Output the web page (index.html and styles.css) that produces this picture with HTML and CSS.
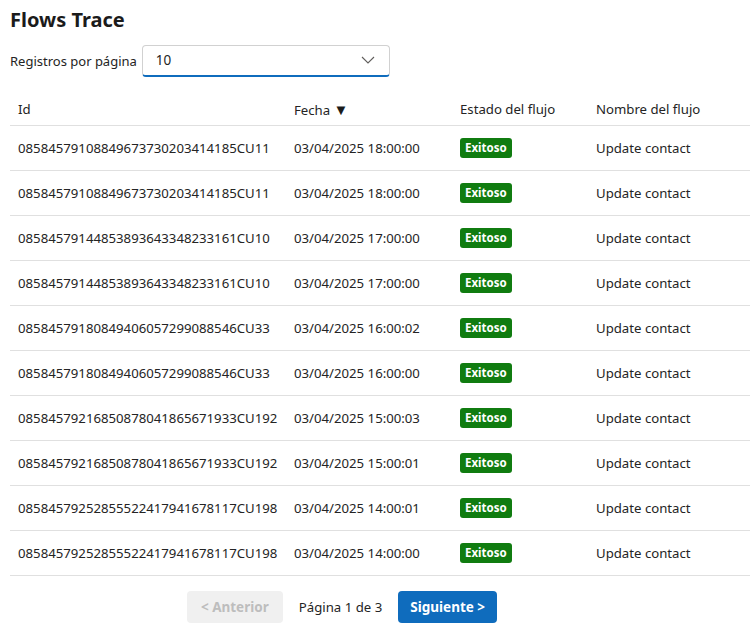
FILE: index.html
```html
<!DOCTYPE html>
<html lang="es">
<head>
<meta charset="utf-8">
<link rel="stylesheet" href="styles.css">
</head>
<body>
<div class="page">
  <h1 class="title">Flows Trace</h1>
  <div class="pager-size">
    <label class="size-label">Registros por página</label>
    <div class="select">
      <span class="select-value">10</span>
      <svg class="chev" width="14" height="8" viewBox="0 0 14 8"><path d="M1 1 L7 7 L13 1" fill="none" stroke="#605e5c" stroke-width="1.1"/></svg>
    </div>
  </div>
  <table class="grid">
    <thead>
      <tr>
        <th class="c-id">Id</th>
        <th class="c-date">Fecha <span class="sort">&#9660;</span></th>
        <th class="c-state">Estado del flujo</th>
        <th class="c-name">Nombre del flujo</th>
      </tr>
    </thead>
    <tbody>
      <tr><td>08584579108849673730203414185CU11</td><td>03/04/2025 18:00:00</td><td><span class="badge">Exitoso</span></td><td>Update contact</td></tr>
      <tr><td>08584579108849673730203414185CU11</td><td>03/04/2025 18:00:00</td><td><span class="badge">Exitoso</span></td><td>Update contact</td></tr>
      <tr><td>08584579144853893643348233161CU10</td><td>03/04/2025 17:00:00</td><td><span class="badge">Exitoso</span></td><td>Update contact</td></tr>
      <tr><td>08584579144853893643348233161CU10</td><td>03/04/2025 17:00:00</td><td><span class="badge">Exitoso</span></td><td>Update contact</td></tr>
      <tr><td>08584579180849406057299088546CU33</td><td>03/04/2025 16:00:02</td><td><span class="badge">Exitoso</span></td><td>Update contact</td></tr>
      <tr><td>08584579180849406057299088546CU33</td><td>03/04/2025 16:00:00</td><td><span class="badge">Exitoso</span></td><td>Update contact</td></tr>
      <tr><td>08584579216850878041865671933CU192</td><td>03/04/2025 15:00:03</td><td><span class="badge">Exitoso</span></td><td>Update contact</td></tr>
      <tr><td>08584579216850878041865671933CU192</td><td>03/04/2025 15:00:01</td><td><span class="badge">Exitoso</span></td><td>Update contact</td></tr>
      <tr><td>08584579252855522417941678117CU198</td><td>03/04/2025 14:00:01</td><td><span class="badge">Exitoso</span></td><td>Update contact</td></tr>
      <tr><td>08584579252855522417941678117CU198</td><td>03/04/2025 14:00:00</td><td><span class="badge">Exitoso</span></td><td>Update contact</td></tr>
    </tbody>
  </table>
  <div class="pagination">
    <button class="btn btn-disabled" disabled>&lt; Anterior</button>
    <span class="page-info">Página 1 de 3</span>
    <button class="btn btn-primary">Siguiente &gt;</button>
  </div>
</div>
</body>
</html>
```

FILE: styles.css
```css
html, body {
  margin: 0;
  padding: 0;
  background: #ffffff;
}
body {
  font-family: "Noto Sans", "Open Sans", sans-serif;
  font-size: 13.2px;
  color: #242424;
}
.page {
  padding: 0 0 0 10px;
  width: 664px;
}
.title {
  margin: 0;
  padding-top: 7px;
  height: 37px;
  font-size: 20px;
  font-weight: 700;
  line-height: 26px;
  color: #1b1b1b;
}
.pager-size {
  display: flex;
  align-items: center;
  gap: 5px;
  height: 33px;
}
.size-label {
  font-size: 13px;
  color: #242424;
}
.select {
  box-sizing: border-box;
  width: 248px;
  height: 32px;
  border: 1px solid #d1d1d1;
  border-bottom: 2px solid #0f6cbd;
  border-radius: 4px;
  display: flex;
  align-items: center;
  justify-content: space-between;
  padding: 0 14px 0 13px;
}
.select-value {
  font-size: 13.5px;
}
.grid {
  margin-top: 16px;
  width: 740px;
  border-collapse: collapse;
  table-layout: fixed;
}
.grid th {
  text-align: left;
  font-weight: 400;
  height: 32px;
  padding: 0 8px;
  border-bottom: 1px solid #e0e0e0;
  font-size: 13.2px;
}
.grid td {
  height: 44px;
  padding: 0 8px;
  border-bottom: 1px solid #e0e0e0;
  white-space: nowrap;
}
.c-id { width: 260px; }
.c-date { width: 150px; }
.c-state { width: 120px; }
.sort {
  font-size: 15px;
  color: #1b1b1b;
}
.badge {
  display: inline-block;
  background: #107c10;
  color: #ffffff;
  font-size: 11.5px;
  font-weight: 700;
  line-height: 20px;
  padding: 0 5px;
  border-radius: 3px;
}
.pagination {
  display: flex;
  justify-content: center;
  align-items: center;
  gap: 16px;
  margin-top: 15px;
}
.btn {
  font-family: inherit;
  font-size: 13.5px;
  font-weight: 700;
  height: 32px;
  padding: 0 12px;
  border-radius: 4px;
  border: none;
  white-space: nowrap;
}
.btn-disabled {
  background: #f0f0f0;
  color: #bdbdbd;
  width: 96px;
}
.btn-primary {
  background: #0f6cbd;
  color: #ffffff;
  width: 99px;
}
.page-info {
  font-size: 13.2px;
  white-space: nowrap;
}
```
